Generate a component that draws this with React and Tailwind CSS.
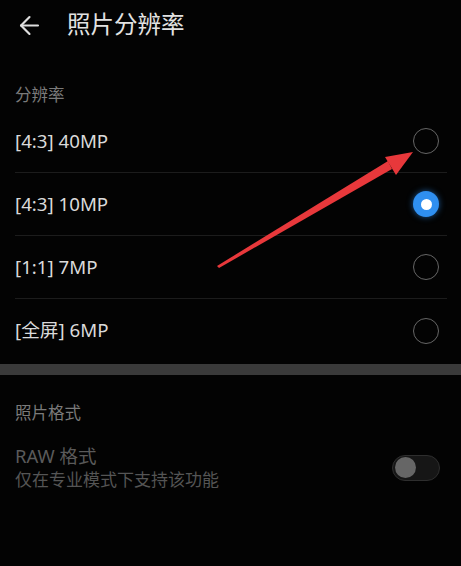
import React, { useState } from "react";
import { ArrowLeft } from "lucide-react";

const options = [
  { id: "40", label: "[4:3] 40MP" },
  { id: "10", label: "[4:3] 10MP" },
  { id: "7", label: "[1:1] 7MP" },
  { id: "6", label: "[全屏] 6MP" },
];

function Radio({ checked }) {
  if (checked) {
    return (
      <div className="flex h-[26px] w-[26px] items-center justify-center rounded-full bg-[#2f8ff0] shadow-[0_0_6px_rgba(47,143,240,0.6)]">
        <div className="h-[11px] w-[11px] rounded-full bg-white" />
      </div>
    );
  }
  return <div className="h-[26px] w-[26px] rounded-full border-[1.5px] border-[#666666]" />;
}

export default function App() {
  const [selected, setSelected] = useState("10");

  return (
    <div
      className="relative h-[566px] w-[461px] overflow-hidden bg-[#030303] text-[#dcdcdc]"
      style={{ fontFamily: '"Noto Sans", "Noto Sans CJK SC", sans-serif' }}
    >
      <div className="flex h-[50px] items-center">
        <ArrowLeft className="ml-[15px] text-[#dedede]" size={29} strokeWidth={1.8} />
        <span className="ml-[23px] text-[23.5px] text-[#e2e2e2]">照片分辨率</span>
      </div>

      <div className="h-[60px] pl-[15px] pt-[34px] text-[16.5px] leading-[22px] text-[#7a7a7a]">分辨率</div>

      <div className="pl-[15px] pr-[14px]">
        {options.map((o, i) => (
          <div
            key={o.id}
            onClick={() => setSelected(o.id)}
            className={`flex h-[63px] items-center justify-between ${i < options.length - 1 ? "border-b border-[#1c1c1c]" : ""}`}
          >
            <span className="text-[18.7px] text-[#dadada]">{o.label}</span>
            <div className="mr-[8px]">
              <Radio checked={selected === o.id} />
            </div>
          </div>
        ))}
      </div>

      <div className="mt-[2px] h-[11px] bg-[#3a3a3a]" />

      <div className="pl-[15px] pt-[27px] text-[16.5px] leading-[22px] text-[#7a7a7a]">照片格式</div>

      <div className="mt-[20px] flex items-center justify-between pl-[15px] pr-[21px]">
        <div className="flex flex-col">
          <span className="text-[18.5px] leading-[24px] text-[#5a5a5a]">RAW 格式</span>
          <span className="mt-[1px] text-[17px] leading-[22px] text-[#555555]">仅在专业模式下支持该功能</span>
        </div>
        <div className="flex h-[26px] w-[48px] items-center rounded-full border border-[#2e2e2e] bg-[#161616] px-[2px]">
          <div className="h-[21px] w-[21px] rounded-full bg-[#666666]" />
        </div>
      </div>

      <svg className="pointer-events-none absolute left-0 top-0" width="461" height="566">
        <polygon points="217,266 219,268 392,169 388,161" fill="#e8383b" />
        <polygon points="413,152 385,157 396,175" fill="#e8383b" />
      </svg>
    </div>
  );
}
